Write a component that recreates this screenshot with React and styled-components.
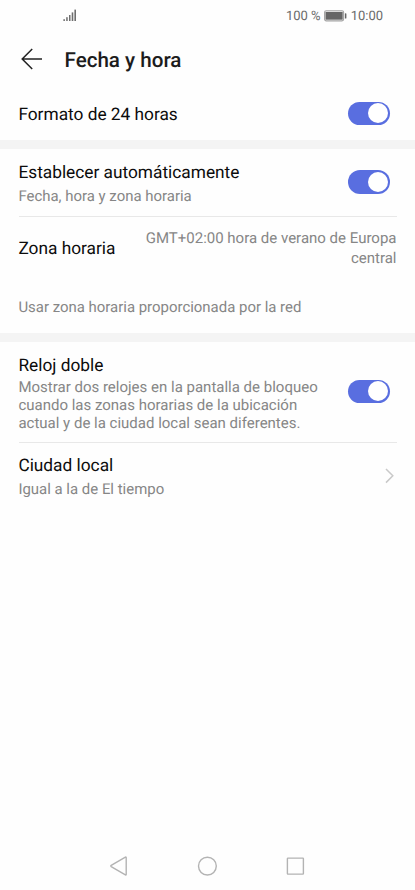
import styled, { createGlobalStyle } from "styled-components";

const GlobalStyle = createGlobalStyle`
  * {
    box-sizing: border-box;
  }
  body {
    margin: 0;
    background: #fefefe;
    font-family: Roboto, "Liberation Sans", sans-serif;
    text-rendering: geometricPrecision;
  }
`;

const App = () => {
  return (
    <>
      <GlobalStyle />
      <Screen>
        <StatusBar>
          <svg width="14" height="13" viewBox="0 0 14 13" fill="#6e6e6e">
            <rect x="0.4" y="10.2" width="1.5" height="1.8" />
            <rect x="3.2" y="8.2" width="1.5" height="3.8" />
            <rect x="6" y="6" width="1.5" height="6" />
            <rect x="8.7" y="3.4" width="1.6" height="8.6" />
            <rect x="11.4" y="0.6" width="1.6" height="11.4" />
          </svg>
          <div className="right">
            <span className="percent">100 %</span>
            <svg width="23" height="12" viewBox="0 0 23 12">
              <rect x="0.6" y="0.7" width="19" height="10.2" rx="1.6" fill="#fff" stroke="#a2a2a2" strokeWidth="1.1" />
              <rect x="1.5" y="1.9" width="17.2" height="7.8" fill="#666" />
              <rect x="20.9" y="3.3" width="1.5" height="5.2" rx="0.6" fill="#666" />
            </svg>
            <span className="time">10:00</span>
          </div>
        </StatusBar>
        <Header>
          <svg width="22" height="22" viewBox="0 0 22 22" fill="none" stroke="#222" strokeWidth="1.5">
            <path d="M21 11H1.2M11.2 1L1.2 11L11.2 21" />
          </svg>
          <h1>Fecha y hora</h1>
        </Header>
        <Row $height={52}>
          <Title>Formato de 24 horas</Title>
          <Toggle on />
        </Row>
        <Band />
        <Row $height={67}>
          <Texts $top={1}>
            <Title>Establecer automáticamente</Title>
            <Subtitle>Fecha, hora y zona horaria</Subtitle>
          </Texts>
          <Toggle on />
        </Row>
        <Divider />
        <Row $height={61}>
          <Title>Zona horaria</Title>
          <Value>GMT+02:00 hora de verano de Europa central</Value>
        </Row>
        <Hint>Usar zona horaria proporcionada por la red</Hint>
        <Band />
        <Row $height={100}>
          <Texts $top={1}>
            <Title>Reloj doble</Title>
            <Description>
              Mostrar dos relojes en la pantalla de bloqueo cuando las zonas
              horarias de la ubicación actual y de la ciudad local sean
              diferentes.
            </Description>
          </Texts>
          <Toggle on />
        </Row>
        <Divider />
        <Row $height={66}>
          <Texts $top={0}>
            <Title>Ciudad local</Title>
            <Subtitle>Igual a la de El tiempo</Subtitle>
          </Texts>
          <Chevron width="10" height="16" viewBox="0 0 10 16">
            <path d="M1 1L7.8 7.8L1 14.6" />
          </Chevron>
        </Row>
        <NavBar>
          <svg width="20" height="20" viewBox="0 0 20 20">
            <path d="M17.2 1.6V18.4Q17.2 19.2 16.4 18.8L2.2 10.6Q1.4 10 2.2 9.4L16.4 1.2Q17.2 0.8 17.2 1.6Z" />
          </svg>
          <svg width="20" height="20" viewBox="0 0 20 20">
            <circle cx="10.4" cy="10.1" r="8.9" />
          </svg>
          <svg width="20" height="20" viewBox="0 0 20 20">
            <rect x="2.4" y="2.1" width="16" height="16" rx="0.6" />
          </svg>
        </NavBar>
      </Screen>
    </>
  );
};
export default App;

const Toggle = ({ on }) => (
  <Track $on={on}>
    <Knob />
  </Track>
);

const Screen = styled.main`
  width: 415px;
  height: 890px;
  display: flex;
  flex-direction: column;
  overflow: hidden;
`;

const StatusBar = styled.div`
  height: 32px;
  flex-shrink: 0;
  display: flex;
  align-items: center;
  justify-content: space-between;
  padding: 0 32px 0 63px;
  color: #6a6a6a;
  > svg {
    margin-top: -1px;
  }
  .right {
    display: flex;
    align-items: center;
    font-size: 13px;
    line-height: 16px;
  }
  .right span {
    padding-top: 2px;
  }
  .right svg {
    margin-top: -1px;
  }
  .percent {
    margin-right: 3px;
  }
  .time {
    margin-left: 4px;
  }
`;

const Header = styled.header`
  height: 56px;
  flex-shrink: 0;
  display: flex;
  align-items: center;
  gap: 21.5px;
  padding: 0 21px;
  svg {
    margin-top: -2px;
  }
  h1 {
    margin: 0;
    padding-top: 2px;
    font-size: 20.6px;
    font-weight: 500;
    line-height: 24px;
    color: #1c1c1c;
  }
`;

const Row = styled.div`
  height: ${({ $height }) => $height}px;
  flex-shrink: 0;
  display: flex;
  align-items: center;
  justify-content: space-between;
  padding: 0 18.5px 0 18.4px;
`;

const Texts = styled.div`
  padding-top: ${({ $top }) => $top}px;
`;

const Band = styled.div`
  height: 9px;
  flex-shrink: 0;
  background: #f4f4f4;
`;

const Divider = styled.div`
  height: 1px;
  flex-shrink: 0;
  margin: 0 18px 0 19px;
  background: #e8e8e8;
`;

const Title = styled.div`
  padding-top: 2px;
  font-size: 17.3px;
  line-height: 24px;
  color: #0c0c0c;
  white-space: nowrap;
`;

const Subtitle = styled.div`
  font-size: 14.95px;
  line-height: 22px;
  color: #868686;
`;

const Description = styled.div`
  width: 310px;
  padding-top: 1px;
  font-size: 15px;
  line-height: 17.8px;
  color: #868686;
`;

const Value = styled.div`
  width: 262px;
  padding-top: 2px;
  font-size: 15px;
  line-height: 19.7px;
  text-align: right;
  color: #868686;
`;

const Hint = styled.div`
  height: 55px;
  flex-shrink: 0;
  padding: 17px 18.4px 0;
  font-size: 14.95px;
  line-height: 24px;
  color: #868686;
`;

const Track = styled.div`
  width: 42px;
  height: 23.4px;
  flex-shrink: 0;
  display: flex;
  align-items: center;
  justify-content: ${({ $on }) => ($on ? "flex-end" : "flex-start")};
  margin: -1px 6.5px 0 0;
  padding: 0 2px;
  border-radius: 12px;
  background: ${({ $on }) => ($on ? "#596ee0" : "#d0d0d0")};
`;

const Knob = styled.div`
  width: 20px;
  height: 20px;
  border-radius: 50%;
  background: #fff;
`;

const Chevron = styled.svg`
  margin-right: 2px;
  fill: none;
  stroke: #c9c9c9;
  stroke-width: 1.5;
`;

const NavBar = styled.nav`
  height: 48px;
  flex-shrink: 0;
  display: flex;
  align-items: center;
  justify-content: space-between;
  margin-top: auto;
  padding: 0 110px 0 109px;
  svg {
    fill: none;
    stroke: #b3b3b3;
    stroke-width: 1.4;
  }
`;
